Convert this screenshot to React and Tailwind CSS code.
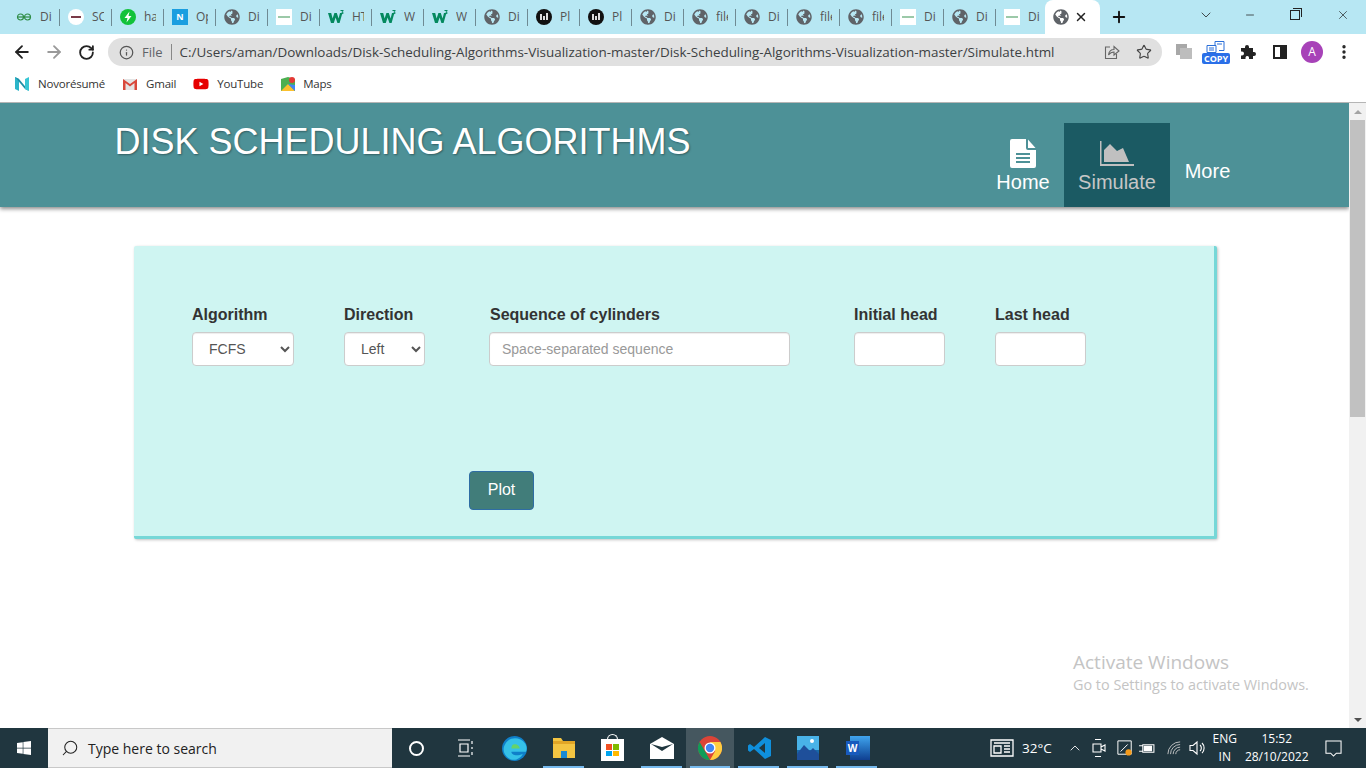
import React from "react";
import {
  ArrowLeft,
  ArrowRight,
  RotateCw,
  Info,
  Star,
  X,
  Plus,
  ChevronDown,
  ChevronUp,
  Minus,
  Search,
  MoreVertical,
} from "lucide-react";
import { FaGlobeAmericas, FaWindows, FaYoutube } from "react-icons/fa";

const uiFont = { fontFamily: '"Open Sans", "Noto Sans", sans-serif' };

const tabs = [
  ["gfg", "Di"], ["scaler", "SC"], ["bolt", "ha"], ["notion", "Op"], ["globe", "Di"],
  ["thumb", "Di"], ["w3", "HT"], ["w3", "W"], ["w3", "W"], ["globe", "Di"],
  ["plot", "Pl"], ["plot", "Pl"], ["globe", "Di"], ["globe", "file"], ["globe", "Di"],
  ["globe", "file"], ["globe", "file"], ["thumb", "Di"], ["globe", "Di"], ["thumb", "Di"],
];

function Favicon({ kind }) {
  if (kind === "globe") return <FaGlobeAmericas className="w-4 h-4 text-[#5f6368]" />;
  if (kind === "gfg")
    return (
      <svg viewBox="0 0 16 16" className="w-4 h-4" fill="none" stroke="#2f8d46" strokeWidth="1.2">
        <circle cx="4.5" cy="8" r="3" />
        <circle cx="11.5" cy="8" r="3" />
        <path d="M1.5 8h13" />
      </svg>
    );
  if (kind === "scaler")
    return (
      <div className="w-4 h-4 rounded-full bg-white flex items-center justify-center">
        <div className="w-[10px] h-[2px] bg-[#7a3a48]" />
      </div>
    );
  if (kind === "bolt")
    return (
      <svg viewBox="0 0 16 16" className="w-4 h-4">
        <circle cx="8" cy="8" r="8" fill="#12c23a" />
        <path d="M9.5 2.5 4.5 9h3l-1 4.5L11.5 7h-3z" fill="#fff" />
      </svg>
    );
  if (kind === "notion")
    return (
      <div className="w-4 h-4 bg-[#1a9ee0] text-white text-[9px] font-bold flex items-center justify-center">N</div>
    );
  if (kind === "thumb")
    return (
      <div className="w-4 h-4 bg-white flex items-center justify-center">
        <div className="w-[12px] h-[2px] border-y border-[#9cc9a8] bg-[#b8cfc0]" />
      </div>
    );
  if (kind === "w3")
    return (
      <svg viewBox="0 0 16 16" className="w-4 h-4">
        <path d="M0 4h3.200l1.400 5.500L6.400 4h2.400l1.800 5.500L12 4h2.400l-2.800 10H9.400L7.600 8.500 5.800 14H3z" fill="#04895f" />
        <path d="M12.500 1h3v1l-1 1c.7.1 1 .5 1 1 0 .8-.7 1.200-1.500 1.200-.5 0-1-.1-1.400-.4l.3-.6c.7.4 1.600.4 1.600-.2 0-.3-.4-.5-1-.5v-.6l1-.9h-2z" fill="#04895f" />
      </svg>
    );
  return (
    <svg viewBox="0 0 16 16" className="w-4 h-4">
      <circle cx="8" cy="8" r="8" fill="#111" />
      <path d="M4 5h2v6H4zM7 7h2v4H7zM10 4h2v7h-2z" fill="#ddd" />
    </svg>
  );
}

function TabStrip() {
  return (
    <div className="h-[34px] bg-[#b7e7f3] flex pl-2 shrink-0 text-[12px] text-[#444]" style={uiFont}>
      {tabs.map(([kind, label], i) => (
        <div key={i} className="w-[52px] h-[34px] flex items-center relative">
          <div className="ml-2 mr-2 flex items-center">
            <Favicon kind={kind} />
          </div>
          <span className="w-[12px] overflow-hidden whitespace-nowrap text-[#555]">{label}</span>
          <div className="absolute right-0 top-[9px] h-[17px] w-px bg-[#6f8a93]" />
        </div>
      ))}
      <div className="-ml-[3px] w-[55px] h-[34px] bg-white rounded-t-lg flex items-center pl-2 relative">
        <FaGlobeAmericas className="w-4 h-4 text-[#5f6368]" />
        <X className="w-[14px] h-[14px] ml-[5px] text-[#222]" strokeWidth={2.5} />
      </div>
      <Plus className="w-[18px] h-[18px] mt-2 ml-[10px] text-[#111]" strokeWidth={2.5} />
      <div className="ml-auto flex items-center h-[30px] text-[#222]">
        <ChevronDown className="w-[16px] h-[16px] mr-[30px]" strokeWidth={1.2} />
        <Minus className="w-[12px] h-[12px] mr-[34px]" strokeWidth={1.5} />
        <div className="relative w-[10px] h-[10px] border border-[#222] mr-[36px]">
          <div className="absolute -top-[3px] -right-[3px] w-[9px] h-[9px] border-t border-r border-[#222]" />
        </div>
        <X className="w-[14px] h-[14px] mr-[16px]" strokeWidth={1.2} />
      </div>
    </div>
  );
}

function Toolbar() {
  return (
    <div className="h-[34px] bg-white flex items-center pl-[6px] pt-[2px] shrink-0" style={uiFont}>
      <div className="w-8 flex justify-center"><ArrowLeft className="w-[20px] h-[20px] text-[#222]" strokeWidth={2.2} /></div>
      <div className="w-8 flex justify-center"><ArrowRight className="w-[20px] h-[20px] text-[#9a9a9a]" strokeWidth={2.2} /></div>
      <div className="w-8 flex justify-center"><RotateCw className="w-[17px] h-[17px] text-[#222]" strokeWidth={2.6} /></div>
      <div className="ml-[6px] w-[1054px] h-[28px] rounded-full bg-[#e0e0e0] flex items-center pl-[11px] pr-[10px] text-[#3c4043]">
        <Info className="w-[15px] h-[15px] text-[#555]" strokeWidth={2} />
        <span className="ml-[8px] text-[13px] text-[#5f6368] pt-[1px]">File</span>
        <div className="ml-[8px] mr-[8px] w-px h-[16px] bg-[#888]" />
        <span className="text-[13.430px] whitespace-nowrap pt-[1px]">
          C:/Users/aman/Downloads/Disk-Scheduling-Algorithms-Visualization-master/Disk-Scheduling-Algorithms-Visualization-master/Simulate.html
        </span>
        <div className="ml-auto flex items-center gap-[16px]">
          <svg viewBox="0 0 16 16" className="w-[16px] h-[16px]" fill="none" stroke="#666" strokeWidth="1.1">
            <path d="M6 3H1.500v11.500h11V10" />
            <path d="M4.500 11C5 7.500 7.500 5.500 10 5.500V2.500l5 4.500-5 4V8c-2.500 0-4 1-5.500 3z" />
          </svg>
          <Star className="w-[16px] h-[16px] text-[#444]" strokeWidth={1.7} />
        </div>
      </div>
      <div className="ml-[6px] w-8 flex justify-center">
        <div className="relative w-4 h-4">
          <div className="absolute left-0 top-0 w-[11px] h-[11px] bg-[#a8a8a8]" />
          <div className="absolute left-[4px] top-[4px] w-[12px] h-[11px] bg-[#bdbdbd]" />
        </div>
      </div>
      <div className="w-8 flex justify-center">
        <div className="flex flex-col items-center w-[28px]">
          <svg viewBox="0 0 22 12" className="w-[22px] h-[12px]" fill="none" stroke="#2a6fd8" strokeWidth="1">
            <path d="M10 4V.5h9v9h-5M2 4.500h9v7H2z" />
            <path d="M4 7h5M4 9h5M12 3h5" />
          </svg>
          <div className="w-[28px] h-[11px] bg-[#2a6fe8] rounded-[2px] text-white text-[9px] font-bold leading-[11px] text-center">COPY</div>
        </div>
      </div>
      <div className="w-8 flex justify-center">
        <svg viewBox="0 0 16 16" className="w-[16px] h-[16px]">
          <path d="M1 4h4V3a2 2 0 0 1 4 0v1h4v4h1a2 2 0 0 1 0 4h-1v3H9v-1.500a1.800 1.800 0 0 0-3.500 0V15H1v-3.500h1a2 2 0 0 0 0-4H1z" fill="#222" />
        </svg>
      </div>
      <div className="w-8 flex justify-center">
        <div className="w-[14px] h-[14px] border-2 border-[#222] flex justify-end">
          <div className="w-[5px] h-full bg-[#222]" />
        </div>
      </div>
      <div className="w-8 flex justify-center">
        <div className="w-[22px] h-[22px] rounded-full bg-[#a742b8] text-white text-[12px] flex items-center justify-center">A</div>
      </div>
      <div className="w-8 flex justify-center"><MoreVertical className="w-[18px] h-[18px] text-[#222]" strokeWidth={2.5} /></div>
    </div>
  );
}

function Bookmarks() {
  return (
    <div className="h-[35px] bg-white border-b border-[#b5b5b5] flex items-center pl-[14px] pb-[2px] shrink-0 text-[11.5px] text-[#333] tracking-[-0.2px]" style={uiFont}>
      <svg viewBox="0 0 16 16" className="w-4 h-4 mr-2">
        <path d="M1 1l4 2v12l-4-2z" fill="#2cb5c9" />
        <path d="M1 1l4 2 10 12-4-2z" fill="#1d8fa6" />
        <path d="M11 3l4-2v14l-4-2z" fill="#38c6d4" />
      </svg>
      <span>Novorésumé</span>
      <svg viewBox="0 0 16 16" className="w-4 h-4 ml-[17px] mr-2">
        <path d="M1 3h14v11H1z" fill="#e4e4e4" />
        <path d="M1 3v11h2.500V7L8 10.500 12.500 7v7H15V3l-7 5z" fill="#d9483b" />
      </svg>
      <span>Gmail</span>
      <FaYoutube className="w-4 h-4 ml-[17px] mr-2 text-[#e60000]" />
      <span>YouTube</span>
      <svg viewBox="0 0 16 16" className="w-4 h-4 ml-[17px] mr-[7px]">
        <path d="M1 3l7-2 7 2v12H1z" fill="#4caf50" />
        <path d="M1 15l7-7 7 7z" fill="#fbc02d" />
        <path d="M8 8l7 7V9z" fill="#4285f4" />
        <circle cx="12" cy="4" r="3" fill="#e53935" />
      </svg>
      <span>Maps</span>
    </div>
  );
}

function Field({ label, width, children, className }) {
  return (
    <div className={className} style={{ width }}>
      <div className="text-[16px] font-bold leading-[18px] text-[#333] mb-[8px] whitespace-nowrap">{label}</div>
      {children}
    </div>
  );
}

const controlClass =
  "block w-full h-[34px] bg-white border border-[#ccc] rounded-[4px] text-[14px] text-[#555] outline-none shadow-[inset_0_1px_1px_rgba(0,0,0,0.075)]";

function Page() {
  return (
    <div className="flex-1 relative bg-white overflow-hidden font-['Liberation_Sans',Arial,sans-serif]">
      <header className="h-[104px] bg-[#4d9197] flex shadow-[0_2px_4px_rgba(0,0,0,0.45)] relative">
        <h1 className="ml-[114.500px] mt-[18px] text-[36px] leading-[42px] text-white [text-shadow:1px_1px_2px_rgba(0,0,0,0.35)] whitespace-nowrap">
          DISK SCHEDULING ALGORITHMS
        </h1>
        <nav className="absolute left-[982px] bottom-0 flex items-end text-[20px] text-white">
          <div className="h-[84px] w-[82px] flex flex-col items-center justify-end pb-[13px]">
            <svg viewBox="0 0 26 29" className="w-[26px] h-[29px] mb-[3px]">
              <path d="M2 0h14v9a2 2 0 0 0 2 2h8v16a2 2 0 0 1-2 2H2a2 2 0 0 1-2-2V2a2 2 0 0 1 2-2z" fill="#fff" />
              <path d="M18 0.5 25.500 9H18z" fill="#fff" />
              <path d="M6 14h14v2H6zM6 18h14v2H6zM6 22h14v2H6z" fill="#4d9197" />
            </svg>
            <span className="leading-[23px]">Home</span>
          </div>
          <div className="h-[84px] w-[106px] bg-[#1b5a63] flex flex-col items-center justify-end pb-[13px] text-[#c6c6c6]">
            <svg viewBox="0 0 34 25" className="w-[34px] h-[25px] mb-[5px]">
              <path d="M0 0h1.500v23H34v2H0z" fill="#c0c0c0" />
              <path d="M4 21V9l6-6 7 7 6-3 6 14z" fill="#c0c0c0" />
            </svg>
            <span className="leading-[23px]">Simulate</span>
          </div>
          <div className="h-[84px] w-[75px] flex justify-center pt-[37px]">
            <span className="leading-[23px]">More</span>
          </div>
        </nav>
      </header>

      <main className="mt-[39px] ml-[134px] w-[1083px] h-[293px] bg-[#cff5f2] border-r-[3px] border-b-[3px] border-[#76d7d7] rounded-[2px] shadow-[1px_1px_3px_rgba(0,0,0,0.25)] pt-[60px]">
        <div className="flex pl-[58px]">
          <Field label="Algorithm" width={102}>
            <select defaultValue="FCFS" className={`${controlClass} pl-[12px]`}>
              <option>FCFS</option>
            </select>
          </Field>
          <Field label="Direction" width={81} className="ml-[50px]">
            <select defaultValue="Left" className={`${controlClass} pl-[12px]`}>
              <option>Left</option>
            </select>
          </Field>
          <Field label="Sequence of cylinders" width={301} className="ml-[64px] [&>div]:ml-[1px]">
            <input placeholder="Space-separated sequence" className={`${controlClass} px-[12px] placeholder:text-[#999]`} />
          </Field>
          <Field label="Initial head" width={91} className="ml-[64px]">
            <input className={`${controlClass} px-[12px]`} />
          </Field>
          <Field label="Last head" width={91} className="ml-[50px]">
            <input className={`${controlClass} px-[12px]`} />
          </Field>
        </div>
        <button className="block mt-[105px] ml-[335px] w-[65px] h-[39px] bg-[#417d7a] border border-[#2e6da4] rounded-[4px] text-white text-[16px] pb-[2px]">
          Plot
        </button>
      </main>

      <div className="absolute left-[1073px] top-[547px] text-[#c4c4c4] pointer-events-none" style={uiFont}>
        <div className="text-[19px] leading-[25px]">Activate Windows</div>
        <div className="text-[14.400px] leading-[20px] whitespace-nowrap">Go to Settings to activate Windows.</div>
      </div>
    </div>
  );
}

function Scrollbar() {
  return (
    <div className="w-[17px] bg-[#f1f1f1] flex flex-col items-center shrink-0">
      <div className="h-[17px] flex items-center justify-center">
        <div className="w-0 h-0 border-x-[4px] border-x-transparent border-b-[4px] border-b-[#a3a3a3]" />
      </div>
      <div className="w-[15px] h-[297px] bg-[#c1c1c1]" />
      <div className="mt-auto h-[17px] flex items-center justify-center">
        <div className="w-0 h-0 border-x-[4px] border-x-transparent border-t-[4px] border-t-[#505050]" />
      </div>
    </div>
  );
}

function TaskIcon({ width = 49, active, running, children }) {
  return (
    <div className={`h-[40px] flex items-center justify-center relative shrink-0 ${active ? "bg-[#45575f]" : ""}`} style={{ width }}>
      {children}
      {running && <div className="absolute bottom-0 left-[4px] right-[4px] h-[2px] bg-[#76b9ed]" />}
    </div>
  );
}

function Taskbar() {
  return (
    <div className="h-[40px] bg-[#20363f] flex items-center shrink-0 text-white" style={uiFont}>
      <div className="w-[48px] flex justify-center"><FaWindows className="w-[16px] h-[16px]" /></div>
      <div className="w-[344px] h-[40px] bg-[#f1f1f1] border-y border-[#c8c8c8] flex items-center pl-[13px] text-[#222]">
        <Search className="w-[18px] h-[18px] -scale-x-100" strokeWidth={1.4} />
        <span className="ml-[9px] text-[14px]">Type here to search</span>
      </div>
      <TaskIcon>
        <div className="w-[15px] h-[15px] rounded-full border-2 border-white" />
      </TaskIcon>
      <TaskIcon>
        <svg viewBox="0 0 18 18" className="w-[18px] h-[18px]" fill="none" stroke="#fff" strokeWidth="1.2">
          <path d="M1 1h12M1 17h12M3 5h8v8H3zM15 2v3M15 8v2M15 13v3" />
        </svg>
      </TaskIcon>
      <TaskIcon>
        <svg viewBox="0 0 24 24" className="w-[25px] h-[25px]">
          <circle cx="12" cy="12" r="12" fill="#0f7fc9" />
          <path d="M3 8c3-7 14-8 19-1 2 3 2 6 1 8H9c0 3 5 5 11 2-2 5-9 8-14 4C2 18 0 13 3 8z" fill="#35c1e8" />
          <path d="M12 8c3 0 5 2 5 4H9c0-2 1-4 3-4z" fill="#65d36a" />
        </svg>
      </TaskIcon>
      <TaskIcon running>
        <svg viewBox="0 0 22 22" className="w-[22px] h-[22px]">
          <path d="M0 1h8l2 3h12v17H0z" fill="#f4c542" />
          <path d="M0 4h22v3H0z" fill="#e2a626" />
          <path d="M8 14h6v7H8z" fill="#1a8ad4" />
        </svg>
      </TaskIcon>
      <TaskIcon>
        <div className="w-[23px] h-[22px] bg-white relative grid grid-cols-2 gap-[1px] p-[5px] mt-1">
          <div className="bg-[#f25022]" />
          <div className="bg-[#7fba00]" />
          <div className="bg-[#00a4ef]" />
          <div className="bg-[#ffb900]" />
          <div className="absolute -top-[5px] left-[6px] w-[11px] h-[7px] border border-white border-b-0 rounded-t-full" />
        </div>
      </TaskIcon>
      <TaskIcon running>
        <svg viewBox="0 0 24 22" className="w-[24px] h-[22px]">
          <path d="M0 7 12 0l12 7v15H0z" fill="#fff" />
          <path d="M1 7l11 7 11-7-11 3z" fill="#20363f" />
        </svg>
      </TaskIcon>
      <TaskIcon active running width={48}>
        <svg viewBox="0 0 24 24" className="w-[24px] h-[24px]">
          <circle cx="12" cy="12" r="12" fill="#db4437" />
          <path d="M12 24A12 12 0 0 1 1.600 6l5.200 9z" fill="#0f9d58" />
          <path d="M12 24a12 12 0 0 0 10.400-18H12l5.200 9z" fill="#ffcd40" />
          <circle cx="12" cy="12" r="5.500" fill="#fff" />
          <circle cx="12" cy="12" r="4.200" fill="#4285f4" />
        </svg>
      </TaskIcon>
      <TaskIcon running>
        <svg viewBox="0 0 24 24" className="w-[24px] h-[24px] ml-[3px]">
          <path d="M17 1l6 3v16l-6 3L6 13l-4 3-2-1.500V9.500L2 8l4 3z" fill="#0f8fdc" />
          <path d="M17 7l-6 5 6 5z" fill="#20363f" />
        </svg>
      </TaskIcon>
      <TaskIcon running>
        <svg viewBox="0 0 22 24" className="w-[22px] h-[24px]">
          <path d="M0 0h22v24H0z" fill="#1868a8" />
          <path d="M0 0h22v14H0z" fill="#49b3e8" />
          <path d="M0 18l7-9 6 6 3-3 6 6v6H0z" fill="#1e4f9a" />
          <circle cx="15" cy="5" r="2" fill="#fff" />
        </svg>
      </TaskIcon>
      <TaskIcon running>
        <div className="relative w-[24px] h-[24px] ml-[3px]">
          <div className="absolute right-0 top-0 w-[20px] h-[24px] bg-gradient-to-b from-[#41a5ee] to-[#103f91]" />
          <div className="absolute left-0 top-[5px] w-[13px] h-[14px] bg-[#185abd] text-white text-[10px] font-bold flex items-center justify-center">W</div>
        </div>
      </TaskIcon>
      <div className="ml-[109px] flex items-center text-[13.500px]">
        <svg viewBox="0 0 24 20" className="w-[24px] h-[20px]" fill="none" stroke="#fff" strokeWidth="1.3">
          <path d="M1 2h22v16H1zM4 5h16M4 8h7v7H4zM14 8h6M14 11h6M14 14h6" />
        </svg>
        <span className="ml-[8px]">32°C</span>
        <ChevronUp className="ml-[15px] w-[16px] h-[16px]" strokeWidth={1.3} />
        <svg viewBox="0 0 16 20" className="ml-[8px] w-[16px] h-[20px]" fill="none" stroke="#fff" strokeWidth="1.1">
          <path d="M4 1.500h6M4 18.500h6M2 6h8v8H2zM10 9l4-2v6l-4-2z" />
        </svg>
        <svg viewBox="0 0 18 18" className="ml-[10px] w-[16px] h-[16px]" fill="none" stroke="#fff" strokeWidth="1.1">
          <path d="M1 1h15v15H1zM4 13l8-8" />
          <circle cx="13" cy="14" r="3.500" fill="#f59b1c" stroke="none" />
        </svg>
        <svg viewBox="0 0 18 14" className="ml-[5px] w-[17px] h-[13px]" fill="none" stroke="#fff" strokeWidth="1.1">
          <path d="M5 3h12v8H5zM1 4h4M1 10h4" />
          <path d="M6 4h9v6H6z" fill="#fff" stroke="none" />
        </svg>
        <svg viewBox="0 0 16 16" className="ml-[12px] w-[14px] h-[14px]" fill="none" stroke="#d0d0d0" strokeWidth="1">
          <path d="M1 15a14 14 0 0 1 14-14M4 15A11 11 0 0 1 15 4M7 15a8 8 0 0 1 8-8M10 15a5 5 0 0 1 5-5" />
        </svg>
        <svg viewBox="0 0 18 16" className="ml-[8px] w-[18px] h-[16px]" fill="none" stroke="#fff" strokeWidth="1.1">
          <path d="M1 5.500h3L8 2v12l-4-3.500H1zM11 5a4 4 0 0 1 0 6M13 3a7 7 0 0 1 0 10" />
        </svg>
        <div className="ml-[3px] w-[30px] text-center text-[12px] leading-[18px]">
          <div>ENG</div>
          <div>IN</div>
        </div>
        <div className="w-[74px] text-center text-[12px] leading-[18px]">
          <div>15:52</div>
          <div>28/10/2022</div>
        </div>
        <svg viewBox="0 0 18 18" className="ml-[11px] w-[17px] h-[17px]" fill="none" stroke="#fff" strokeWidth="1.1">
          <path d="M1 1h16v13h-5l-3 3-3-3H1z" />
        </svg>
      </div>
    </div>
  );
}

export default function App() {
  return (
    <div className="w-[1366px] h-[768px] flex flex-col overflow-hidden">
      <TabStrip />
      <Toolbar />
      <Bookmarks />
      <div className="flex-1 flex min-h-0">
        <Page />
        <Scrollbar />
      </div>
      <Taskbar />
    </div>
  );
}
